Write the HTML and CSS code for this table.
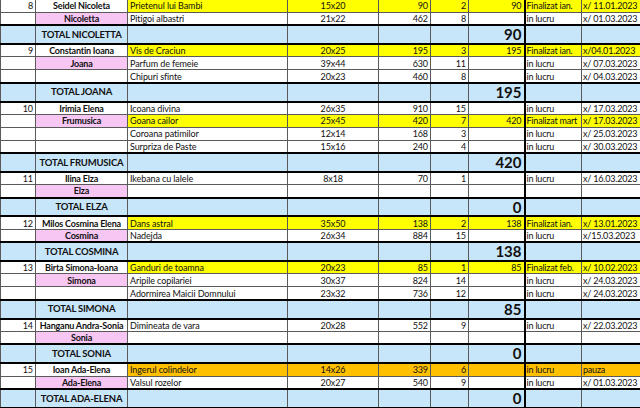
FILE: index.html
```html
<!DOCTYPE html>
<html>
<head>
<meta charset="utf-8">
<link rel="stylesheet" href="styles.css">
</head>
<body>
<table class="sheet">
<colgroup>
<col class="c-a"><col class="c-b"><col class="c-c"><col class="c-d"><col class="c-e"><col class="c-f"><col class="c-g"><col class="c-h"><col class="c-i">
</colgroup>
<tbody>
<tr class="row"><td>8</td><td class="name">Seidel Nicoleta</td><td class="y">Prietenul lui Bambi</td><td class="y">15x20</td><td class="y">90</td><td class="y">2</td><td class="y">90</td><td class="y">Finalizat ian.</td><td class="y">x/ 11.01.2023</td></tr>
<tr class="row"><td></td><td class="name pk">Nicoletta</td><td>Pitigoi albastri</td><td>21x22</td><td>462</td><td>8</td><td></td><td>in lucru</td><td>x/ 01.03.2023</td></tr>
<tr class="total"><td></td><td>TOTAL NICOLETTA</td><td></td><td></td><td></td><td></td><td>90</td><td></td><td></td></tr>

<tr class="row"><td>9</td><td class="name">Constantin Ioana</td><td class="y">Vis de Craciun</td><td class="y">20x25</td><td class="y">195</td><td class="y">3</td><td class="y">195</td><td class="y">Finalizat ian.</td><td class="y">x/04.01.2023</td></tr>
<tr class="row"><td></td><td class="name pk">Joana</td><td>Parfum de femeie</td><td>39x44</td><td>630</td><td>11</td><td></td><td>in lucru</td><td>x/ 07.03.2023</td></tr>
<tr class="row"><td></td><td></td><td>Chipuri sfinte</td><td>20x23</td><td>460</td><td>8</td><td></td><td>in lucru</td><td>x/ 04.03.2023</td></tr>
<tr class="total"><td></td><td>TOTAL JOANA</td><td></td><td></td><td></td><td></td><td>195</td><td></td><td></td></tr>

<tr class="row"><td>10</td><td class="name">Irimia Elena</td><td>Icoana divina</td><td>26x35</td><td>910</td><td>15</td><td></td><td>in lucru</td><td>x/ 17.03.2023</td></tr>
<tr class="row"><td></td><td class="name pk">Frumusica</td><td class="y">Goana cailor</td><td class="y">25x45</td><td class="y">420</td><td class="y">7</td><td class="y">420</td><td class="y">Finalizat mart</td><td class="y">x/ 17.03.2023</td></tr>
<tr class="row"><td></td><td></td><td>Coroana patimilor</td><td>12x14</td><td>168</td><td>3</td><td></td><td>in lucru</td><td>x/ 25.03.2023</td></tr>
<tr class="row"><td></td><td></td><td>Surpriza de Paste</td><td>15x16</td><td>240</td><td>4</td><td></td><td>in lucru</td><td>x/ 30.03.2023</td></tr>
<tr class="total"><td></td><td>TOTAL FRUMUSICA</td><td></td><td></td><td></td><td></td><td>420</td><td></td><td></td></tr>

<tr class="row"><td>11</td><td class="name">Ilina Elza</td><td>Ikebana cu lalele</td><td>8x18</td><td>70</td><td>1</td><td></td><td>in lucru</td><td>x/ 16.03.2023</td></tr>
<tr class="row"><td></td><td class="name pk">Elza</td><td></td><td></td><td></td><td></td><td></td><td></td><td></td></tr>
<tr class="total"><td></td><td>TOTAL ELZA</td><td></td><td></td><td></td><td></td><td>0</td><td></td><td></td></tr>

<tr class="row"><td>12</td><td class="name">Milos Cosmina Elena</td><td class="y">Dans astral</td><td class="y">35x50</td><td class="y">138</td><td class="y">2</td><td class="y">138</td><td class="y">Finalizat ian.</td><td class="y">x/ 13.01.2023</td></tr>
<tr class="row"><td></td><td class="name pk">Cosmina</td><td>Nadejda</td><td>26x34</td><td>884</td><td>15</td><td></td><td>in lucru</td><td>x/15.03.2023</td></tr>
<tr class="total"><td></td><td>TOTAL COSMINA</td><td></td><td></td><td></td><td></td><td>138</td><td></td><td></td></tr>

<tr class="row"><td>13</td><td class="name">Birta Simona-Ioana</td><td class="y">Ganduri de toamna</td><td class="y">20x23</td><td class="y">85</td><td class="y">1</td><td class="y">85</td><td class="y">Finalizat feb.</td><td class="y">x/ 10.02.2023</td></tr>
<tr class="row"><td></td><td class="name pk">Simona</td><td>Aripile copilariei</td><td>30x37</td><td>824</td><td>14</td><td></td><td>in lucru</td><td>x/ 24.03.2023</td></tr>
<tr class="row"><td></td><td></td><td>Adormirea Maicii Domnului</td><td>23x32</td><td>736</td><td>12</td><td></td><td>in lucru</td><td>x/ 24.03.2023</td></tr>
<tr class="total"><td></td><td>TOTAL SIMONA</td><td></td><td></td><td></td><td></td><td>85</td><td></td><td></td></tr>

<tr class="row"><td>14</td><td class="name">Hanganu Andra-Sonia</td><td>Dimineata de vara</td><td>20x28</td><td>552</td><td>9</td><td></td><td>in lucru</td><td>x/ 22.03.2023</td></tr>
<tr class="row"><td></td><td class="name pk">Sonia</td><td></td><td></td><td></td><td></td><td></td><td></td><td></td></tr>
<tr class="total"><td></td><td>TOTAL SONIA</td><td></td><td></td><td></td><td></td><td>0</td><td></td><td></td></tr>

<tr class="row"><td>15</td><td class="name">Ioan Ada-Elena</td><td class="o">Ingerul colindelor</td><td class="o">14x26</td><td class="o">339</td><td class="o">6</td><td class="o"></td><td class="o">in lucru</td><td class="o">pauza</td></tr>
<tr class="row"><td></td><td class="name pk">Ada-Elena</td><td>Valsul rozelor</td><td>20x27</td><td>540</td><td>9</td><td></td><td>in lucru</td><td>x/ 01.03.2023</td></tr>
<tr class="total"><td></td><td>TOTAL ADA-ELENA</td><td></td><td></td><td></td><td></td><td>0</td><td></td><td></td></tr>
</tbody>
</table>
</body>
</html>
```
FILE: styles.css
```css
html, body {
  margin: 0;
  padding: 0;
  background: #ffffff;
  overflow: hidden;
}
.sheet {
  width: 640px;
  table-layout: fixed;
  border-collapse: collapse;
  margin-top: -1px;
  font-family: "Lato", "Liberation Sans", sans-serif;
  font-size: 9px;
  letter-spacing: -0.1px;
  color: #111;
}
.c-a { width: 35px; }
.c-b { width: 92px; }
.c-c { width: 160px; }
.c-d { width: 91px; }
.c-e { width: 52px; }
.c-f { width: 38px; }
.c-g { width: 56px; }
.c-h { width: 57px; }
.c-i { width: 59px; }

.sheet td {
  border: 1px solid #5a5a5a;
  padding: 0 2px;
  white-space: nowrap;
  overflow: hidden;
  line-height: 1;
  vertical-align: middle;
}
.row { height: 12.9px; }
.total { height: 18.8px; }

.sheet td:nth-child(1) { text-align: right; padding-right: 2px; }
.sheet td:nth-child(2) { text-align: center; font-weight: bold; padding: 0 1px; letter-spacing: -0.2px; }
.sheet td:nth-child(3) { text-align: left; }
.sheet td:nth-child(4) { text-align: center; }
.sheet td:nth-child(5),
.sheet td:nth-child(6),
.sheet td:nth-child(7) { text-align: right; padding-right: 2px; }
.sheet td:nth-child(7) { border-right: 2px solid #000; }
.sheet td:nth-child(8),
.sheet td:nth-child(9) { text-align: left; padding: 0 1px; letter-spacing: -0.2px; }

.total td {
  background: #c8e6fa;
  border-top: 2px solid #000;
  border-bottom: 2px solid #000;
}
.total td:nth-child(2) {
  font-size: 9.5px;
}
.total td:nth-child(7) {
  font-size: 15px;
  font-weight: 700;
  letter-spacing: 0;
}

.y { background: #ffff00; }
.o { background: #ffc000; }
.pk { background: #f7c6f3; }
```
